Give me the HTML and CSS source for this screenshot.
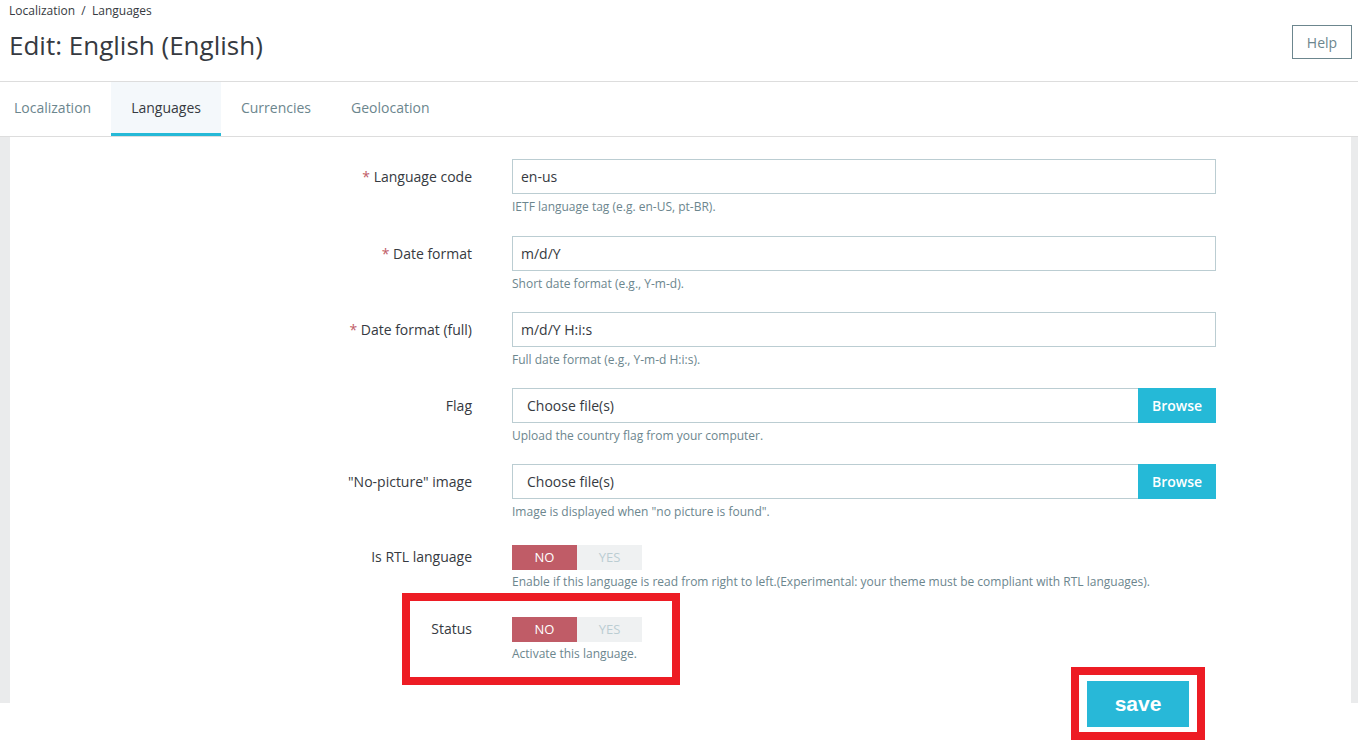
FILE: index.html
```html
<!DOCTYPE html>
<html lang="en">
<head>
  <meta charset="UTF-8" />
  <meta name="viewport" content="width=device-width, initial-scale=1.0" />
  <title>Edit: English (English)</title>
  <link rel="stylesheet" href="styles.css">
</head>
<body>

  <div class="page">
    <header class="page-head">
      <div>
        <div class="breadcrumb">Localization&nbsp; / &nbsp;Languages</div>
        <h1 class="page-title">Edit: English (English)</h1>
      </div>
      <button class="btn-help">Help</button>
    </header>

    <nav class="tabs">
      <a class="tab first">Localization</a>
      <a class="tab active">Languages</a>
      <a class="tab">Currencies</a>
      <a class="tab">Geolocation</a>
    </nav>

    <div class="content">
      <div class="card">

        <div class="form-row">
          <label class="label"><span class="req">*</span> Language code</label>
          <div class="field">
            <div class="input">en-us</div>
            <p class="help">IETF language tag (e.g. en-US, pt-BR).</p>
          </div>
        </div>

        <div class="form-row">
          <label class="label"><span class="req">*</span> Date format</label>
          <div class="field">
            <div class="input">m/d/Y</div>
            <p class="help">Short date format (e.g., Y-m-d).</p>
          </div>
        </div>

        <div class="form-row">
          <label class="label"><span class="req">*</span> Date format (full)</label>
          <div class="field">
            <div class="input">m/d/Y H:i:s</div>
            <p class="help">Full date format (e.g., Y-m-d H:i:s).</p>
          </div>
        </div>

        <div class="form-row">
          <label class="label">Flag</label>
          <div class="field">
            <div class="file-input">
              <span class="file-name">Choose file(s)</span>
              <span class="btn-browse">Browse</span>
            </div>
            <p class="help">Upload the country flag from your computer.</p>
          </div>
        </div>

        <div class="form-row">
          <label class="label">"No-picture" image</label>
          <div class="field">
            <div class="file-input">
              <span class="file-name">Choose file(s)</span>
              <span class="btn-browse">Browse</span>
            </div>
            <p class="help">Image is displayed when "no picture is found".</p>
          </div>
        </div>

        <div class="form-row switch-row">
          <label class="label">Is RTL language</label>
          <div class="field">
            <div class="switch">
              <span class="switch-no">NO</span>
              <span class="switch-yes">YES</span>
            </div>
            <p class="help">Enable if this language is read from right to left.(Experimental: your theme must be compliant with RTL languages).</p>
          </div>
        </div>

        <div class="form-row switch-row">
          <label class="label">Status</label>
          <div class="field">
            <div class="switch">
              <span class="switch-no">NO</span>
              <span class="switch-yes">YES</span>
            </div>
            <p class="help">Activate this language.</p>
          </div>
        </div>

      </div>
    </div>

    <!-- annotations drawn over the page -->
    <div class="mark mark-status"></div>
    <div class="mark mark-save">
      <button class="btn-save">save</button>
    </div>
  </div>

</body>
</html>
```

FILE: styles.css
```css
:root {
  --text: #363a41;
  --muted: #6c868e;
  --line: #dddddd;
  --border: #bbcdd2;
  --primary: #25b9d7;
  --danger: #c05c67;
  --mark: #ed1c24;
}

* {
  box-sizing: border-box;
}

body {
  margin: 0;
  font-family: 'Open Sans', 'Liberation Sans', sans-serif;
  color: var(--text);
  background-color: #fff;
}

.page {
  position: relative;
  width: 1358px;
  height: 749px;
  overflow: hidden;
}

/* header */
.page-head {
  display: flex;
  justify-content: space-between;
  height: 82px;
  padding: 0 6px 0 9px;
  border-bottom: 1px solid var(--line);
}

.breadcrumb {
  font-size: 12px;
  line-height: 21px;
}

.page-title {
  margin: 6px 0 0;
  font-size: 26px;
  font-weight: 400;
  line-height: 36px;
}

.btn-help {
  align-self: flex-start;
  margin-top: 25px;
  width: 60px;
  height: 34px;
  font-family: inherit;
  font-size: 14px;
  color: var(--muted);
  background: #fff;
  border: 1px solid var(--muted);
  border-radius: 0;
}

/* tabs */
.tabs {
  display: flex;
  height: 55px;
  border-bottom: 1px solid var(--line);
}

.tab {
  height: 54px;
  padding: 0 20px;
  font-size: 14px;
  line-height: 51px;
  color: var(--muted);
  border-bottom: 3px solid transparent;
}

.tab.first {
  padding-left: 14px;
}

.tab.active {
  color: var(--text);
  background-color: #f4f8fb;
  border-bottom-color: var(--primary);
}

/* content */
.content {
  height: 566px;
  padding: 0 7px 0 10px;
  background-color: #eaebec;
}

.card {
  height: 100%;
  padding-top: 22px;
  background-color: #fff;
}

.form-row {
  display: flex;
  margin-bottom: 20px;
}

.form-row:first-child {
  margin-bottom: 21px;
}

.label {
  flex: 0 0 462px;
  margin-right: 40px;
  text-align: right;
  font-size: 14px;
  line-height: 35px;
}

.req {
  color: var(--danger);
}

.field {
  width: 704px;
}

.input {
  height: 35px;
  padding: 0 8px;
  font-size: 14px;
  line-height: 33px;
  border: 1px solid var(--border);
}

.help {
  margin: 5px 0 0;
  font-size: 12px;
  line-height: 16px;
  color: var(--muted);
}

.file-input {
  display: flex;
  height: 35px;
  border: 1px solid var(--border);
  border-right: none;
}

.file-name {
  flex: 1;
  padding-left: 14px;
  font-size: 14px;
  line-height: 33px;
}

.btn-browse {
  width: 78px;
  margin: -1px 0;
  font-size: 14px;
  font-weight: 600;
  line-height: 35px;
  text-align: center;
  color: #fff;
  background-color: var(--primary);
}

/* switches */
.switch-row {
  margin-bottom: 22px;
}

.switch-row .label {
  padding-top: 4px;
  line-height: 26px;
}

.switch {
  display: flex;
  margin-top: 5px;
  width: 130px;
  height: 25px;
}

.switch span {
  flex: 1;
  font-size: 13px;
  line-height: 25px;
  text-align: center;
}

.switch-no {
  color: #fff;
  background-color: var(--danger);
}

.switch-yes {
  color: var(--border);
  background-color: #eff1f2;
}

.switch-row .help {
  margin-top: 4px;
}

/* red annotation boxes */
.mark {
  position: absolute;
  border: 8px solid var(--mark);
}

.mark-status {
  left: 402px;
  top: 593px;
  width: 278px;
  height: 92px;
}

.mark-save {
  left: 1071px;
  top: 667px;
  padding: 6px 8px 5px;
  background-color: #fff;
}

.btn-save {
  display: block;
  width: 102px;
  height: 46px;
  padding: 0;
  font-family: 'Liberation Sans', Arial, sans-serif;
  font-size: 21px;
  font-weight: 700;
  color: #fff;
  background-color: #28b8d8;
  border: none;
}
```
